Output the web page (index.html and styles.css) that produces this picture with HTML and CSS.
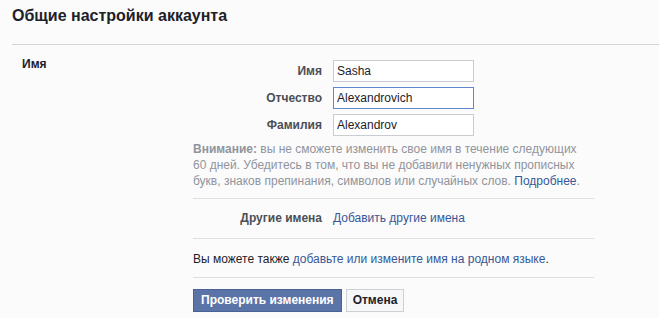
FILE: index.html
```html
<!DOCTYPE html>
<html lang="ru">
<head>
<meta charset="utf-8">
<title>Общие настройки аккаунта</title>
<link rel="stylesheet" href="styles.css">
</head>
<body>
<h1 class="title">Общие настройки аккаунта</h1>
<section class="panel">
  <div class="panel-label">Имя</div>
  <div class="panel-body">
    <div class="fields">
      <label class="field-label" for="first">Имя</label>
      <input class="field-input" id="first" type="text" value="Sasha">
      <label class="field-label" for="middle">Отчество</label>
      <input class="field-input is-focused" id="middle" type="text" value="Alexandrovich">
      <label class="field-label" for="last">Фамилия</label>
      <input class="field-input" id="last" type="text" value="Alexandrov">
    </div>
    <p class="notice"><b>Внимание:</b> вы не сможете изменить свое имя в течение следующих<br>60 дней. Убедитесь в том, что вы не добавили ненужных прописных<br>букв, знаков препинания, символов или случайных слов. <a class="link" href="#">Подробнее</a>.</p>
    <div class="other-names">
      <span class="field-label">Другие имена</span>
      <a class="link" href="#">Добавить другие имена</a>
    </div>
    <p class="native">Вы можете также <a class="link" href="#">добавьте или измените имя на родном языке</a>.</p>
    <div class="actions">
      <button class="btn btn-primary" type="button">Проверить изменения</button>
      <button class="btn btn-default" type="button">Отмена</button>
    </div>
  </div>
</section>
</body>
</html>
```
FILE: styles.css
```css
html, body {
  margin: 0;
  padding: 0;
}
body {
  background: #fbfbfb;
  font-family: "Liberation Sans", Arial, sans-serif;
  font-size: 12px;
  color: #1d2129;
}
.title {
  margin: 0;
  padding: 6px 12px 0 12px;
  height: 44px;
  box-sizing: border-box;
  font-size: 16px;
  font-weight: bold;
  color: #1d2129;
  line-height: 20px;
}
.panel {
  margin-left: 12px;
  border-top: 1px solid #d4d4d4;
  display: grid;
  grid-template-columns: 181px 401px;
  padding-top: 11px;
}
.panel-label {
  padding-left: 10px;
  font-weight: bold;
  line-height: 16px;
  color: #1d2129;
}
.fields {
  display: grid;
  grid-template-columns: 129px 141px;
  column-gap: 11px;
  row-gap: 5px;
  align-items: center;
  margin-top: 4px;
}
.field-label {
  text-align: right;
  font-weight: bold;
  color: #4b4f56;
}
.field-input {
  box-sizing: border-box;
  width: 141px;
  height: 22px;
  margin: 0;
  padding: 0 3px;
  border: 1px solid #c9ccd1;
  background: #fff;
  font-family: "Liberation Sans", Arial, sans-serif;
  font-size: 12px;
  color: #1d2129;
  outline: none;
}
.field-input.is-focused {
  border-color: #5d87cf;
}
.notice {
  margin: 5px 0 0 0;
  padding-bottom: 9px;
  border-bottom: 1px solid #dddfe2;
  line-height: 16px;
  color: #90949c;
}
.notice b {
  color: #90949c;
}
.link {
  color: #365899;
  text-decoration: none;
}
.other-names {
  display: grid;
  grid-template-columns: 129px auto;
  column-gap: 11px;
  line-height: 16px;
  padding: 11px 0 12px 0;
  border-bottom: 1px solid #dddfe2;
}
.native {
  margin: 0;
  line-height: 16px;
  padding: 12px 0 10px 0;
  border-bottom: 1px solid #dddfe2;
  color: #1d2129;
}
.actions {
  display: flex;
  gap: 4px;
  padding-top: 11px;
}
.btn {
  box-sizing: border-box;
  height: 23px;
  margin: 0;
  padding: 0 7px;
  font-family: "Liberation Sans", Arial, sans-serif;
  font-size: 12px;
  font-weight: bold;
  line-height: 21px;
  cursor: pointer;
}
.btn-primary {
  background: #5b74a8;
  border: 1px solid #4a6196;
  color: #fff;
}
.btn-default {
  padding: 0 6px;
  background: #f6f7f9;
  border: 1px solid #ced0d4;
  color: #1d2129;
}
```
